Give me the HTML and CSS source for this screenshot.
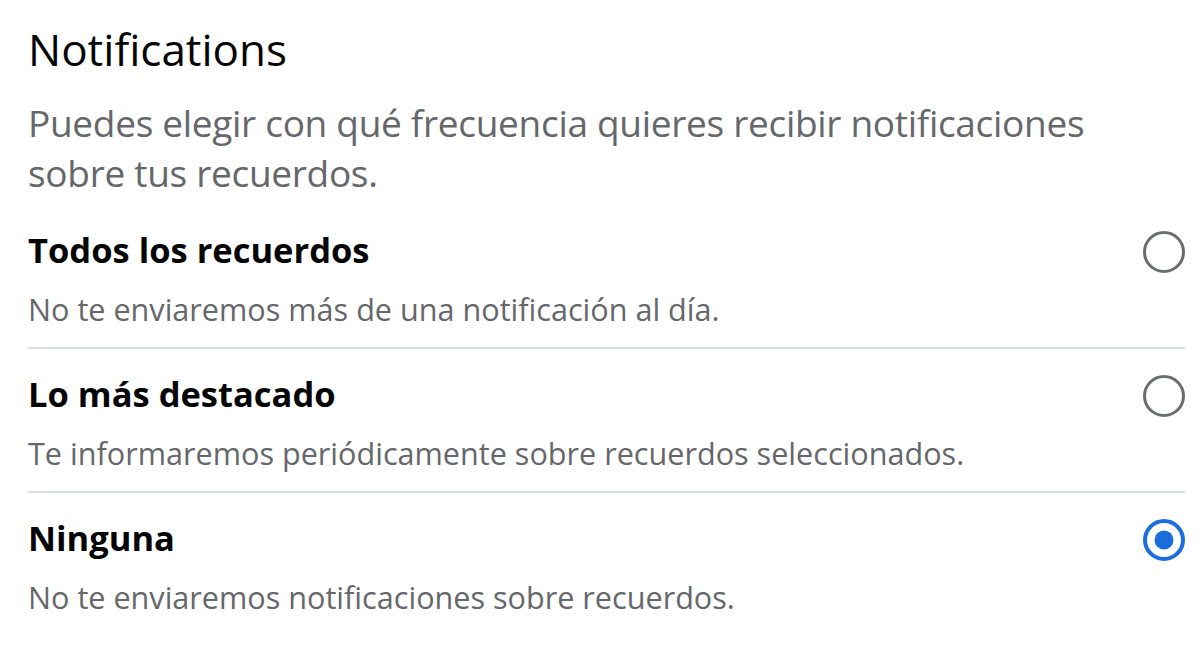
FILE: index.html
```html
<!DOCTYPE html>
<html lang="es">
<head>
<meta charset="utf-8">
<title>Notifications</title>
<link rel="stylesheet" href="styles.css">
</head>
<body>
<main class="panel">
  <h1 class="title">Notifications</h1>
  <p class="desc">Puedes elegir con qué frecuencia quieres recibir notificaciones sobre tus recuerdos.</p>
  <ul class="options">
    <li class="option">
      <div class="option-head">
        <span class="option-title">Todos los recuerdos</span>
        <span class="radio"></span>
      </div>
      <div class="option-sub">No te enviaremos más de una notificación al día.</div>
    </li>
    <li class="option">
      <div class="option-head">
        <span class="option-title">Lo más destacado</span>
        <span class="radio"></span>
      </div>
      <div class="option-sub">Te informaremos periódicamente sobre recuerdos seleccionados.</div>
    </li>
    <li class="option">
      <div class="option-head">
        <span class="option-title">Ninguna</span>
        <span class="radio radio-on"></span>
      </div>
      <div class="option-sub">No te enviaremos notificaciones sobre recuerdos.</div>
    </li>
  </ul>
</main>
</body>
</html>
```

FILE: styles.css
```css
* { box-sizing: border-box; }
html, body {
  margin: 0;
  padding: 0;
  background: #ffffff;
}
body {
  font-family: "Open Sans", "Noto Sans", sans-serif;
  color: #050505;
}
.panel {
  padding: 23px 15px 0 28px;
}
.title {
  margin: 0;
  font-size: 44px;
  line-height: 52px;
  font-weight: 500;
  color: #050505;
}
.desc {
  margin: 23px 0 7px 0;
  font-size: 37px;
  line-height: 50px;
  letter-spacing: -0.3px;
  color: #65676b;
  font-weight: 400;
}
.options {
  list-style: none;
  margin: 0;
  padding: 0;
}
.option {
  padding: 25px 0 18px 0;
  border-top: 2px solid #dadde1;
}
.option:first-child {
  border-top: none;
}
.option-head {
  display: flex;
  align-items: center;
  justify-content: space-between;
  height: 40px;
}
.option-title {
  font-size: 34.5px;
  line-height: 40px;
  font-weight: 700;
  color: #050505;
}
.option-sub {
  margin-top: 19px;
  font-size: 30.6px;
  line-height: 40px;
  color: #65676b;
}
.radio {
  width: 42px;
  height: 42px;
  border-radius: 50%;
  border: 3px solid #6a6c70;
  margin-top: 4px;
  flex: none;
  position: relative;
}
.radio-on {
  border: 4.5px solid #1b6ddc;
}
.radio-on::after {
  content: "";
  position: absolute;
  width: 19px;
  height: 19px;
  border-radius: 50%;
  background: #1b6ddc;
  top: 50%;
  left: 50%;
  transform: translate(-50%, -50%);
}
```
